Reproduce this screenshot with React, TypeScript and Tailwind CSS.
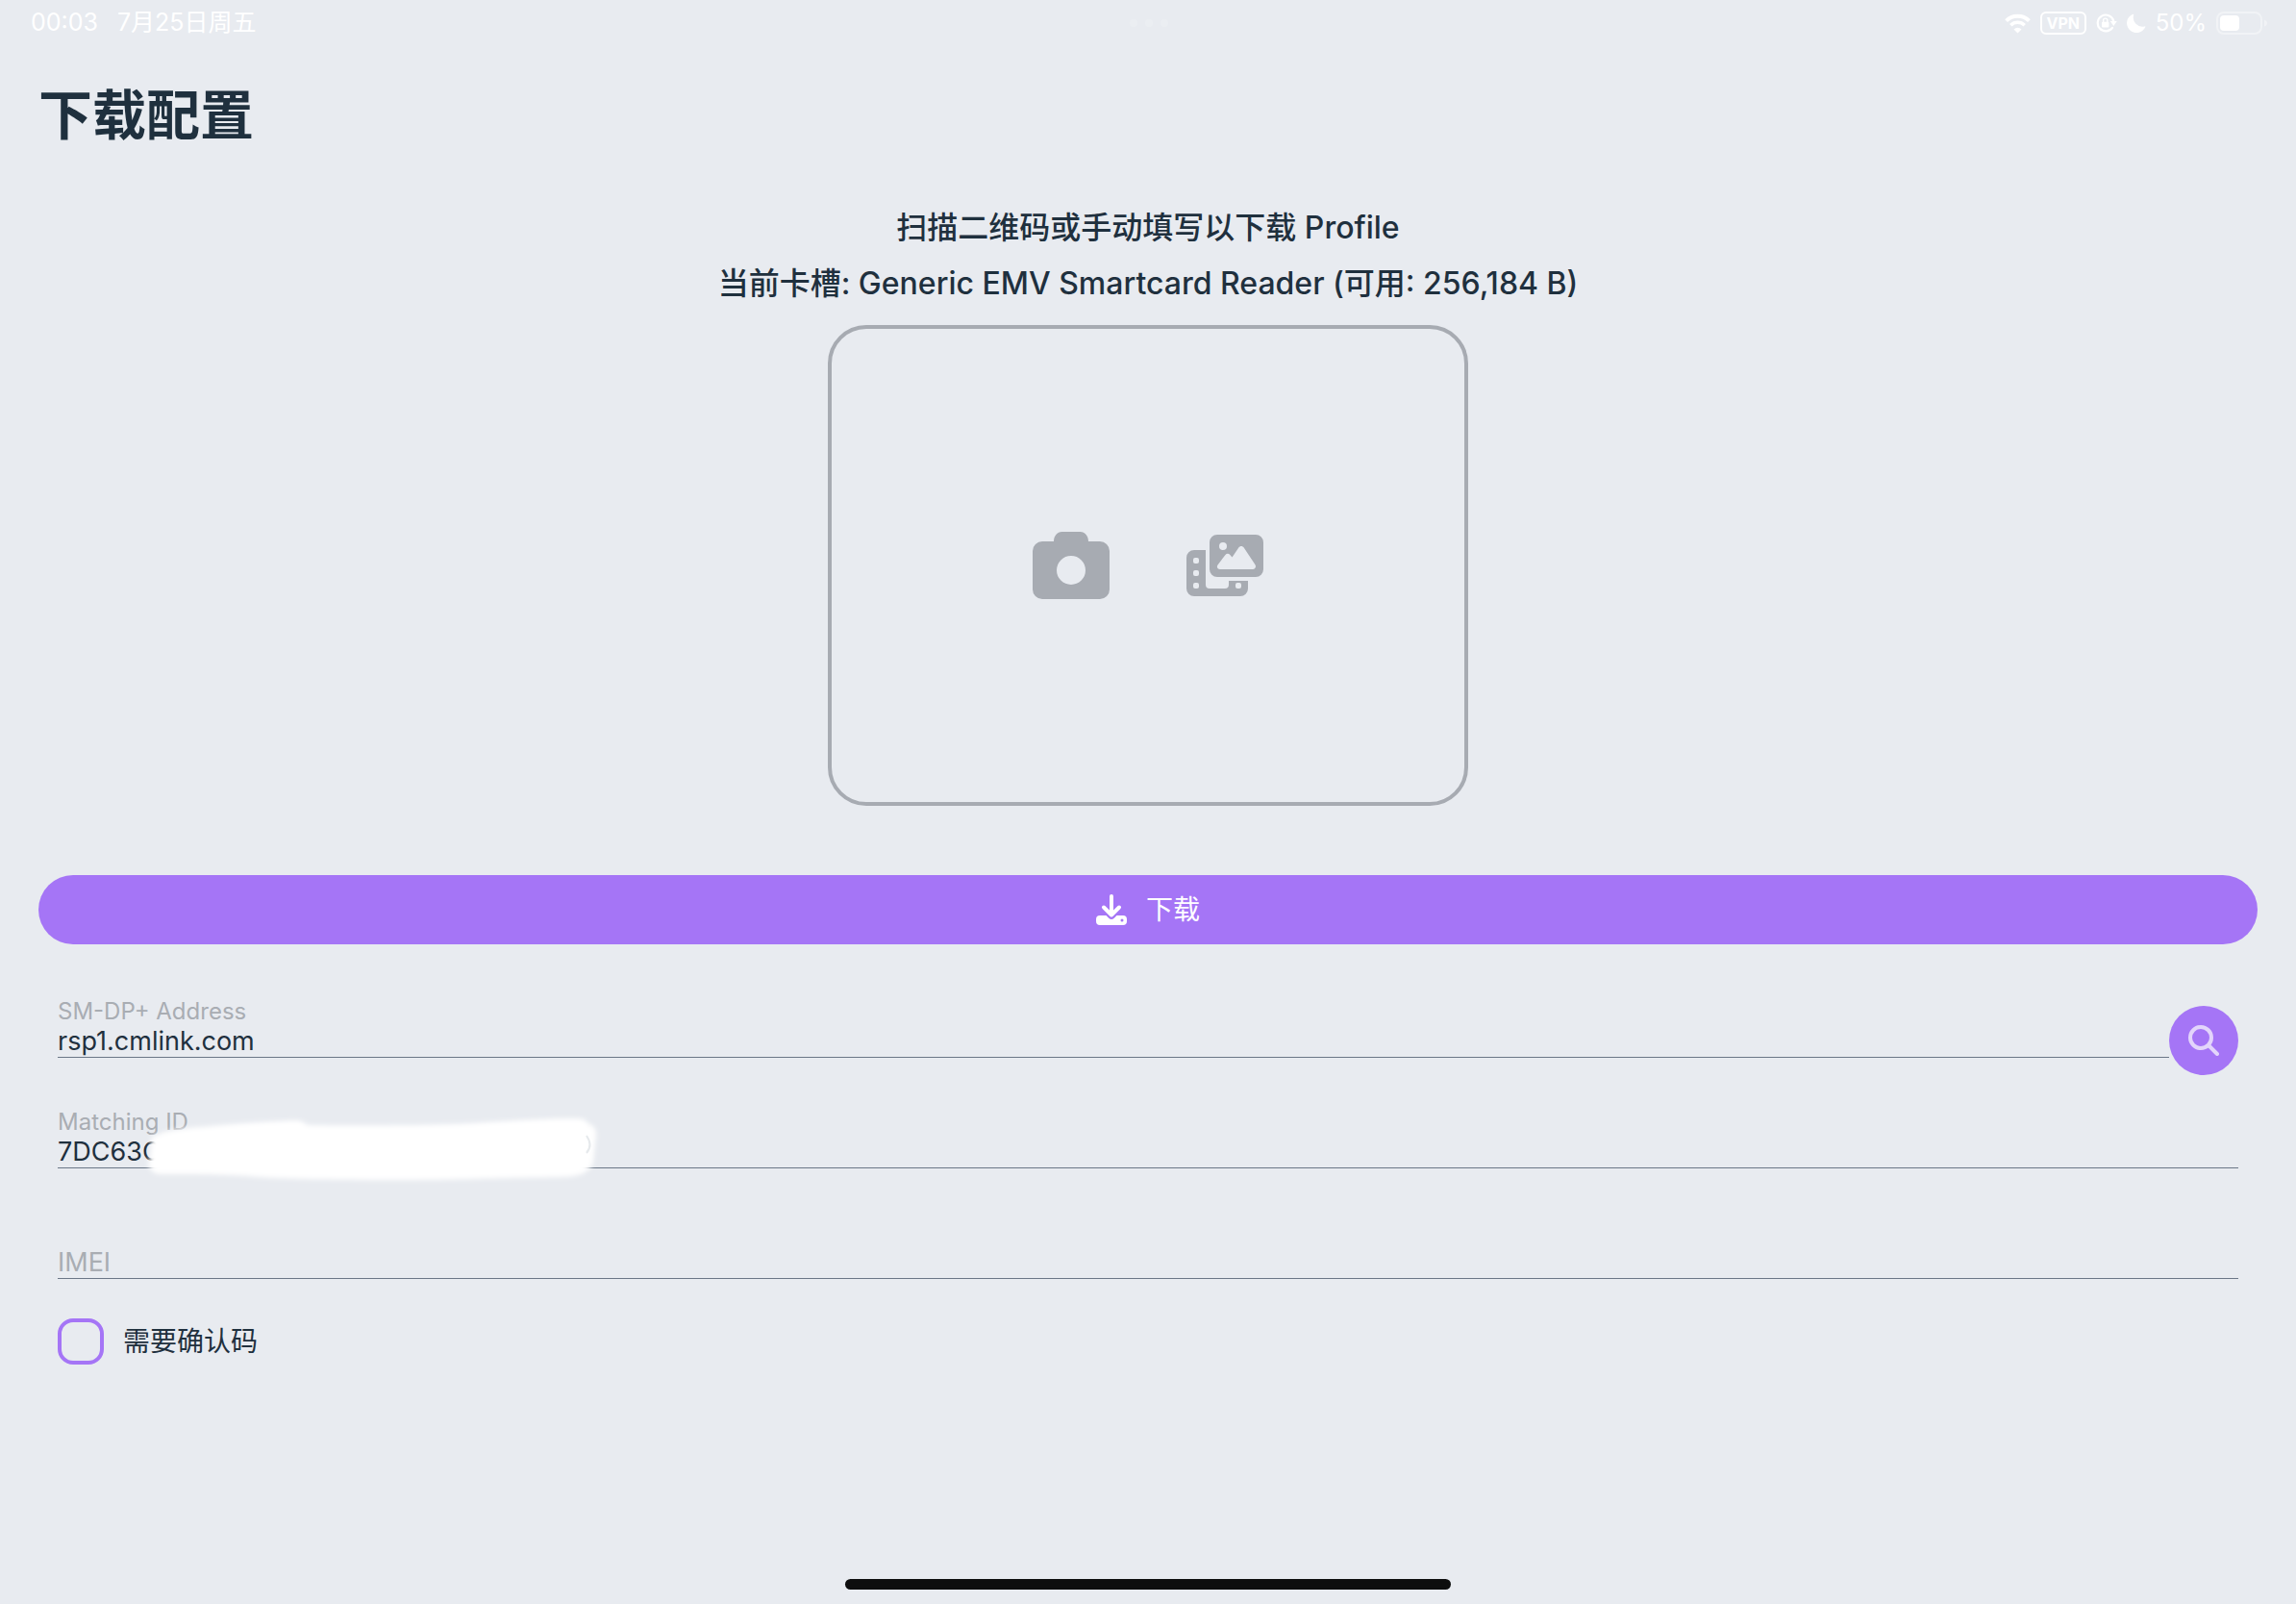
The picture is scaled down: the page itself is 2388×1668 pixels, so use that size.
import { useState, type ReactNode } from "react";

/** Status bar glyphs, all drawn white on the page background. */

function WifiIcon() {
  return (
    <svg className="h-[21px] w-[27px]" viewBox="0 0 27 21" fill="none">
      <path d="M1.6 7.6a17 17 0 0 1 23.8 0" stroke="white" strokeWidth="4" />
      <path d="M6.3 12.2a10.4 10.4 0 0 1 14.4 0" stroke="white" strokeWidth="3.6" />
      <path d="M13.5 20.5l-4-4.1a5.8 5.8 0 0 1 8 0z" fill="white" />
    </svg>
  );
}

function RotationLockIcon() {
  return (
    <svg className="h-[20px] w-[22px]" viewBox="0 0 22 20" fill="none">
      <path
        d="M18.2 7.6A8.4 8.4 0 1 0 17 14.8"
        stroke="white"
        strokeWidth="2.2"
        strokeLinecap="round"
      />
      <path d="M14.8 8h7l-3.5 5z" fill="white" />
      <rect x="6" y="8.8" width="7.4" height="5.8" rx="1" fill="white" />
      <path d="M7.6 9V7.2a2.1 2.1 0 0 1 4.2 0V9" stroke="white" strokeWidth="1.4" />
    </svg>
  );
}

function MoonIcon() {
  return (
    <svg className="h-[20px] w-[20px]" viewBox="0 0 20 20">
      <path
        d="M6.4.8a.6.6 0 0 1 .8.8A9.4 9.4 0 0 0 18.6 13.4a.5.5 0 0 1 .6.8A10 10 0 1 1 6.4.8z"
        fill="white"
      />
    </svg>
  );
}

function BatteryIcon() {
  return (
    <svg className="h-[24px] w-[54px]" viewBox="0 0 54 24" fill="none">
      <rect x="1" y="1" width="46" height="22" rx="7" stroke="white" strokeOpacity="0.4" strokeWidth="2" />
      <rect x="4" y="4" width="20" height="16" rx="4" fill="white" />
      <path d="M50 8.4c2 .8 3 2 3 3.6s-1 2.8-3 3.6z" fill="white" fillOpacity="0.4" />
    </svg>
  );
}

function CameraIcon() {
  return (
    <svg className="h-[70px] w-[80px]" viewBox="0 0 80 70">
      <path
        fillRule="evenodd"
        fill="currentColor"
        d="M22 10C22 4.5 25.5 0 30.5 0H49.5C54.5 0 58 4.5 58 10H70A10 10 0 0 1 80 20V60A10 10 0 0 1 70 70H10A10 10 0 0 1 0 60V20A10 10 0 0 1 10 10ZM40 25a15 15 0 1 0 0 30a15 15 0 1 0 0-30z"
      />
    </svg>
  );
}

function PhotoFilmIcon() {
  return (
    <svg className="h-[64px] w-[80px]" viewBox="0 0 80 64" fill="currentColor">
      <path
        fillRule="evenodd"
        d="M32 0H72A8 8 0 0 1 80 8V36A8 8 0 0 1 72 44H32A8 8 0 0 1 24 36V8A8 8 0 0 1 32 0ZM38 8a4 4 0 1 0 0 8a4 4 0 1 0 0-8zM54.3 13.5L47.5 23.5L45.3 20.9C44 19.4 41.8 19.4 40.5 20.9L32.5 31.5C31 33.7 32.4 36 35 36H69C71.5 36 72.8 33.5 71.5 31.3L59.7 13.5C58.4 11.5 55.6 11.5 54.3 13.5Z"
      />
      <path
        fillRule="evenodd"
        d="M8 16H20V52A4 4 0 0 0 24 56H40A4 4 0 0 0 44 52V48H64V56A8 8 0 0 1 56 64H8A8 8 0 0 1 0 56V24A8 8 0 0 1 8 16ZM9 24a2 2 0 0 0-2 2v2a2 2 0 0 0 2 2h2a2 2 0 0 0 2-2v-2a2 2 0 0 0-2-2zM9 37a2 2 0 0 0-2 2v2a2 2 0 0 0 2 2h2a2 2 0 0 0 2-2v-2a2 2 0 0 0-2-2zM9 50a2 2 0 0 0-2 2v2a2 2 0 0 0 2 2h2a2 2 0 0 0 2-2v-2a2 2 0 0 0-2-2zM53 50a2 2 0 0 0-2 2v2a2 2 0 0 0 2 2h2a2 2 0 0 0 2-2v-2a2 2 0 0 0-2-2z"
      />
    </svg>
  );
}

function DownloadIcon() {
  return (
    <svg className="h-8 w-8" viewBox="0 0 32 32" fill="none">
      <path
        d="M16 2V21M8 13.5L16 21.5L24 13.5"
        stroke="white"
        strokeWidth="4"
        strokeLinecap="round"
        strokeLinejoin="round"
      />
      <path
        fillRule="evenodd"
        fill="white"
        d="M4 22H10.5L13.2 24.7A4 4 0 0 0 18.8 24.7L21.5 22H28A4 4 0 0 1 32 26V28A4 4 0 0 1 28 32H4A4 4 0 0 1 0 28V26A4 4 0 0 1 4 22ZM27 25.5a1.5 1.5 0 1 0 0 3a1.5 1.5 0 1 0 0-3z"
      />
    </svg>
  );
}

function SearchIcon() {
  return (
    <svg className="h-8 w-8" viewBox="0 0 32 32" fill="none" stroke="#e3d5fb" strokeWidth="4">
      <circle cx="13" cy="13" r="11" />
      <path d="M21.5 21.5L30 30" strokeLinecap="round" />
    </svg>
  );
}

/** White marker stroke that hides most of the matching ID. */
function Redaction() {
  return (
    <svg
      className="pointer-events-none absolute top-0 left-[84px] h-[84px] w-[488px]"
      viewBox="84 0 488 84"
      fill="none"
    >
      <defs>
        <filter id="soft" x="-5%" y="-20%" width="110%" height="140%">
          <feGaussianBlur stdDeviation="2.5" />
        </filter>
      </defs>
      <path
        filter="url(#soft)"
        fill="white"
        d="M97 30C116 20 140 20 160 18C190 15 220 13 246 12Q256 12 259 17C300 18 400 18 444 14C480 12 510 10 540 10Q550 10 552 16Q561 18 560 28L557 54Q554 71 524 71C460 72 400 74 365 74C290 74 240 73 207 71C180 68 140 68 108 68Q97 68 94 58Q98 46 97 30Z"
      />
      <path d="M550 28Q557 38 550 46" stroke="#e6e9ec" strokeWidth="2" />
    </svg>
  );
}

function Field({
  id,
  label,
  value,
  onChange,
  floating = true,
  children,
}: {
  id: string;
  label: string;
  value: string;
  onChange: (value: string) => void;
  /** Whether the caption sits above the text rather than inside the box. */
  floating?: boolean;
  children?: ReactNode;
}) {
  return (
    <div className="relative flex h-20 items-start">
      <div className="flex min-w-0 flex-1 flex-col">
        <label htmlFor={id} className="h-7 text-2xl leading-7 text-[#a9adb3]">
          {floating ? label : ""}
        </label>
        <input
          id={id}
          type="text"
          aria-label={label}
          placeholder={label}
          value={value}
          onChange={(e) => onChange(e.target.value)}
          className="h-[34px] w-full border-b border-[#6b7787] text-[27px] leading-8 outline-none placeholder:text-[#a9adb3]"
        />
      </div>
      {children}
    </div>
  );
}

export default function App() {
  const [address, setAddress] = useState("rsp1.cmlink.com");
  const [matchingId, setMatchingId] = useState("7DC63C");
  const [imei, setImei] = useState("");
  const [needsCode, setNeedsCode] = useState(false);

  return (
    <div className="flex min-h-screen flex-col bg-[#e8ebf0] font-[Inter,'Noto_Sans_CJK_SC',sans-serif] text-[#1f303e]">
      <header className="grid h-12 grid-cols-3 items-center pr-[29px] pl-8 text-[25px] text-white">
        <div className="flex gap-5">
          <span>00:03</span>
          <span>7月25日周五</span>
        </div>
        <div className="flex justify-center gap-2">
          <span className="h-2 w-2 rounded-full bg-[#ebeef2]" />
          <span className="h-2 w-2 rounded-full bg-[#ebeef2]" />
          <span className="h-2 w-2 rounded-full bg-[#ebeef2]" />
        </div>
        <div className="flex items-center justify-end gap-[10px]">
          <WifiIcon />
          <span className="flex h-6 w-12 items-center justify-center rounded-md border-2 border-white text-base font-bold">
            VPN
          </span>
          <RotationLockIcon />
          <MoonIcon />
          <span className="text-2xl">50%</span>
          <BatteryIcon />
        </div>
      </header>

      <main className="flex flex-col px-10">
        <h1 className="mt-10 text-[56px] leading-[64px] font-bold">下载配置</h1>

        <div className="mt-[65px] flex flex-col items-center gap-[18px] text-[32px] leading-10 font-medium">
          <p>扫描二维码或手动填写以下载 Profile</p>
          <p>当前卡槽: Generic EMV Smartcard Reader (可用: 256,184 B)</p>
        </div>

        <div className="mt-[23px] flex h-[500px] w-[666px] items-center justify-center gap-20 self-center rounded-[40px] border-4 border-[#a7abb2] text-[#a7abb2]">
          <button type="button" aria-label="拍照">
            <CameraIcon />
          </button>
          <button type="button" aria-label="相册">
            <PhotoFilmIcon />
          </button>
        </div>

        <button
          type="button"
          className="mt-[72px] flex h-[72px] items-center justify-center gap-5 rounded-full bg-[#a575f6] text-[28px] text-white"
        >
          <DownloadIcon />
          下载
        </button>

        <form className="mt-14 flex flex-col px-5" onSubmit={(e) => e.preventDefault()}>
          <div className="flex flex-col gap-[35px]">
            <Field id="address" label="SM-DP+ Address" value={address} onChange={setAddress}>
              <button
                type="button"
                aria-label="搜索"
                className="mt-2 flex h-[72px] w-[72px] items-center justify-center rounded-full bg-[#a575f6]"
              >
                <SearchIcon />
              </button>
            </Field>
            <Field id="matching-id" label="Matching ID" value={matchingId} onChange={setMatchingId}>
              <Redaction />
            </Field>
            <Field id="imei" label="IMEI" value={imei} onChange={setImei} floating={false} />
          </div>

          <label className="mt-[23px] flex items-center gap-5 self-start text-[28px]">
            <input
              type="checkbox"
              checked={needsCode}
              onChange={(e) => setNeedsCode(e.target.checked)}
              className="h-12 w-12 appearance-none rounded-2xl border-4 border-[#a575f6] checked:bg-[#a575f6]"
            />
            需要确认码
          </label>
        </form>
      </main>

      {/* home indicator */}
      <div className="mt-auto flex justify-center pb-[15px]">
        <div className="h-[11px] w-[630px] rounded-full bg-[#0d0e0e]" />
      </div>
    </div>
  );
}
